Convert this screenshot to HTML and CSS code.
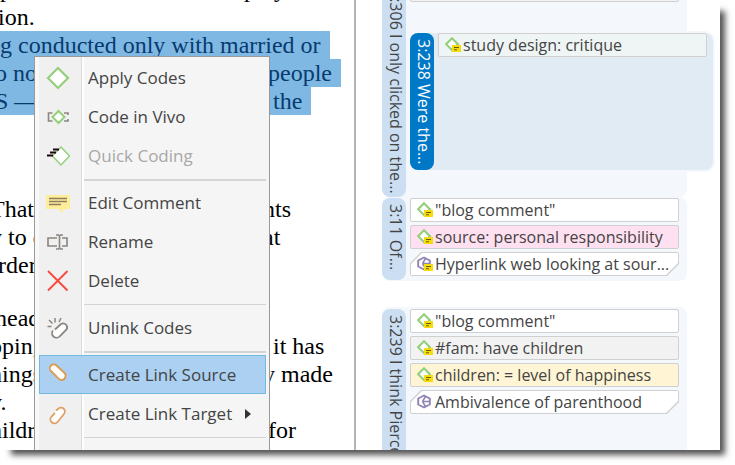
FILE: index.html
```html
<!DOCTYPE html>
<html lang="en">
<head>
<meta charset="utf-8">
<title>Document coding</title>
<link rel="stylesheet" href="styles.css">
</head>
<body>
<svg class="defs" aria-hidden="true">
  <symbol id="code" viewBox="0 0 16 16">
    <path d="M7 1.300 12.900 7.200 7 13.100 1.100 7.200Z" fill="#fff" stroke="#94cf7c" stroke-width="2.100"/>
    <path d="M7 8h9v7H7z" fill="#f5dc0a"/>
    <path d="M9 10.500h5M9 12.800h3" stroke="#6b5a14" stroke-width="1.100"/>
  </symbol>
  <symbol id="link" viewBox="0 0 16 16">
    <path d="M7 1.500 12.800 4.500v6L7 13.500 1.200 10.500v-6Z" fill="#fff" stroke="#9182b4" stroke-width="1.900" stroke-linejoin="round"/>
    <path d="M5.500 7.500h7M5.500 7.500 8.500 2.500M5.500 7.500 8.500 12.500" fill="none" stroke="#9182b4" stroke-width="1.500"/>
  </symbol>
  <symbol id="badge" viewBox="0 0 16 16">
    <path d="M7 8h9v7H7z" fill="#f5dc0a"/>
    <path d="M9 10.500h5M9 12.800h3" stroke="#6b5a14" stroke-width="1.100"/>
  </symbol>
</svg>
<main class="window">
  <section class="document">
    <p class="para para--first">
      <span class="line"><span class="head">p</span><span class="tail tail--early">p &nbsp; y</span></span>
      <span class="line"><span class="head head--near">ion.</span></span>
      <mark class="line"><span class="head">g conducted only with married or</span></mark>
      <mark class="line"><span class="head head--mid">o not</span><span class="tail">people</span></mark>
      <mark class="line"><span class="head head--mid">S —–</span><span class="tail tail--far">the</span></mark>
    </p>
    <p class="para">
      <span class="line"><span class="head head--far">That</span><span class="tail tail--near">nts</span></span>
      <span class="line"><span class="head head--far">y to c</span><span class="tail tail--near">at</span></span>
      <span class="line"><span class="head head--near">rder</span></span>
    </p>
    <p class="para">
      <span class="line"><span class="head head--mid">head</span></span>
      <span class="line"><span class="head head--far">pping</span><span class="tail tail--far">it has</span></span>
      <span class="line"><span class="head head--far">hings</span><span class="tail tail--near">y made</span></span>
      <span class="line"><span class="head head--far">y.</span></span>
      <span class="line"><span class="head head--far">hildr</span><span class="tail">for</span></span>
    </p>
    <nav class="menu">
      <button class="item"><svg class="icon" viewBox="0 0 24 24"><path d="M12 2 22 12 12 22 2 12Z" fill="#fff" stroke="#94cf7c" stroke-width="2.200"/></svg><span>Apply Codes</span></button>
      <button class="item"><svg class="icon" viewBox="0 0 24 24"><path d="M6.500 8H2.500v8h4M18 8h4v2M22 14v2h-4" fill="none" stroke="#8c8580" stroke-width="1.600"/><path d="M12.500 6 18.500 12l-6 6-6-6Z" fill="#fff" stroke="#94cf7c" stroke-width="2"/></svg><span>Code in Vivo</span></button>
      <button class="item" disabled><svg class="icon" viewBox="0 0 24 24"><path d="M15 3 23.500 12 15 21 6.500 12Z" fill="#fff" stroke="#94cf7c" stroke-width="1.500"/><path d="M7 5.500h6M4 8.500h6M1 11.500h6" stroke="#1c0710" stroke-width="1.800"/></svg><span>Quick Coding</span></button>
      <hr class="rule rule--thick">
      <button class="item"><svg class="icon" viewBox="0 0 24 24"><path d="M0 4h24v14h-7v4l-5-4H0Z" fill="#feee99"/><path d="M3 7.500h18M3 10.500h18M3 13.500h12" stroke="#8f7c62" stroke-width="1.300"/></svg><span>Edit Comment</span></button>
      <button class="item"><svg class="icon" viewBox="0 0 24 24"><path d="M11 8H2v8h9M16 8h5v8h-5M13.500 6v12M10 5h2.500l1 1 1-1H17M10 19h2.500l1-1 1 1H17" fill="none" stroke="#8c8580" stroke-width="1.600"/></svg><span>Rename</span></button>
      <button class="item"><svg class="icon" viewBox="0 0 24 24"><path d="M2 2 21.500 21.500M21.500 2 2 21.500" stroke="#fa4a40" stroke-width="1.900"/></svg><span>Delete</span></button>
      <hr class="rule">
      <button class="item"><svg class="icon" viewBox="0 0 24 24"><path d="M9 13.500 15 8a4 4 0 0 1 5.500 5.500L14 20a4.200 4.200 0 0 1-7-5.500Z" fill="#fff"/><path d="M9 13.500 15 8a4 4 0 0 1 5.500 5.500L14 20a4.200 4.200 0 0 1-7-5.500" fill="none" stroke="#8c8580" stroke-width="1.800"/><path d="M9 2v4.500M3 4l3.500 3.500M15 2l-2 4M1.500 10.500h4" stroke="#8c8580" stroke-width="1.500"/></svg><span>Unlink Codes</span></button>
      <hr class="rule rule--thick">
      <button class="item item--active"><svg class="icon" viewBox="0 0 24 24"><path d="M10.500 13.500 5 8a3.800 3.800 0 0 1 5.500-5.500L18 9.500a4.200 4.200 0 0 1-3 7.500q-2-.5-4.500-3.500" fill="#fff" stroke="#dc9a4d" stroke-width="1.800"/></svg><span>Create Link Source</span></button>
      <button class="item"><svg class="icon" viewBox="0 0 24 24"><path d="M10 9 13 7a4 4 0 0 1 5 6l-6.500 7a4 4 0 0 1-6-5.500Z" fill="#fff"/><path d="m10 8.500 2-1.500a3.800 3.800 0 0 1 6 5l-6.500 8a3.800 3.800 0 0 1-6-5.500L9 11" fill="none" stroke="#dfa065" stroke-width="1.800"/></svg><span>Create Link Target</span><svg class="arrow" viewBox="0 0 6 10"><path d="m0 0 6 5-6 5Z" fill="#333"/></svg></button>
      <hr class="rule">
    </nav>
  </section>
  <aside class="margin">
    <section class="quote quote--top">
      <h2 class="bar bar--end">3:306 I only clicked on the...</h2>
      <div class="stack">
        <div class="code code--grey"></div>
        <section class="quote quote--selected">
          <h2 class="bar bar--selected">3:238 Were the...</h2>
          <ul class="codes">
            <li class="code code--mint"><svg class="mark"><use href="#code"/></svg>study design: critique</li>
          </ul>
        </section>
      </div>
    </section>
    <section class="quote">
      <h2 class="bar">3:11 Of...</h2>
      <ul class="codes">
        <li class="code"><svg class="mark"><use href="#code"/></svg>"blog comment"</li>
        <li class="code code--pink"><svg class="mark"><use href="#code"/></svg>source: personal responsibility</li>
        <li class="code code--link"><svg class="mark"><use href="#link"/><use href="#badge"/></svg>Hyperlink web looking at sour...</li>
      </ul>
    </section>
    <section class="quote quote--last">
      <h2 class="bar bar--open">3:239 I think Pierce</h2>
      <ul class="codes">
        <li class="code"><svg class="mark"><use href="#code"/></svg>"blog comment"</li>
        <li class="code code--grey"><svg class="mark"><use href="#code"/></svg>#fam: have children</li>
        <li class="code code--cream"><svg class="mark"><use href="#code"/></svg>children: = level of happiness</li>
        <li class="code code--link"><svg class="mark"><use href="#link"/></svg>Ambivalence of parenthood</li>
      </ul>
    </section>
  </aside>
</main>
</body>
</html>
```
FILE: styles.css
```css
* {
  box-sizing: border-box;
}

body {
  margin: 0;
  height: 100vh;
  padding: 0 15px 15px 0;
  overflow: hidden;
  background: #fff;
  font-family: "Open Sans", "Noto Sans", sans-serif;
  font-size: 16px;
  color: #444;
}

.defs {
  display: none;
}

.window {
  display: flex;
  height: 100%;
  background: #fff;
  box-shadow: 8px 8px 6px -3px #555;
}

.document {
  position: relative;
  flex: 1;
  min-width: 0;
  overflow: hidden;
  border-right: 2px solid #b4b4b4;
  font: 24px/28px "Liberation Serif", serif;
  color: #000;
}

.para {
  margin: 0 0 25px;
}

.para--first {
  margin: -25px 0 80px;
}

.line {
  display: grid;
  grid-template-columns: 268px auto;
  width: max-content;
  height: 28px;
  white-space: pre;
}

mark.line {
  padding-right: 9px;
  background: #80b8e4;
  color: #073b6e;
}

.head:only-child {
  grid-column: 1 / -1;
}

.head--near {
  text-indent: -2px;
}

.head--mid {
  text-indent: -5px;
}

.head--far {
  text-indent: -10px;
}

.tail--near {
  margin-left: -5px;
}

.tail--far {
  margin-left: 5px;
}

.tail--early {
  margin-left: -24px;
}

.menu {
  position: absolute;
  top: 56px;
  left: 34px;
  width: 236px;
  height: 420px;
  padding: 1px 3px 0 4px;
  border: 1px solid #999;
  background: linear-gradient(90deg, #f8f8f8 4px, #f0f0f0 4px 46px, #dcdcdc 46px 47px, #fff 47px 49px, #f5f5f5 49px);
}

.item {
  display: flex;
  align-items: center;
  width: 100%;
  height: 39px;
  padding: 0 14px 0 6px;
  border: 1px solid transparent;
  background: none;
  font: 17px/24px "Open Sans", "Noto Sans", sans-serif;
  color: #444;
  text-align: left;
  white-space: nowrap;
}

.item:disabled {
  color: #a8a8a8;
}

.item--active {
  border-color: #70bade;
  background: #abd0f2;
}

.icon {
  flex: none;
  width: 24px;
  height: 24px;
  margin-right: 18px;
}

.arrow {
  flex: none;
  width: 6px;
  height: 10px;
  margin-left: auto;
}

.rule {
  height: 1px;
  margin: 4px 0 3px 45px;
  border: 0;
  background: #d4d4d4;
}

.rule--thick {
  height: 2px;
  margin-bottom: 2px;
}

.margin {
  display: flex;
  flex-direction: column;
  width: 364px;
  padding-left: 26px;
  overflow: hidden;
}

.quote {
  display: flex;
  flex: none;
  gap: 4px;
  width: 305px;
  margin-bottom: 26px;
  padding: 1px 8px 1px 0;
  border-radius: 8px;
  background: #f4f8fc;
}

.quote--top {
  height: 197px;
  margin: 0;
  padding: 0 8px 0 0;
  border-radius: 0 0 8px 8px;
}

.quote--last {
  flex: 1;
  margin: 0;
  padding: 2px 8px 0 0;
  border-radius: 8px 8px 0 0;
}

.quote--selected {
  width: 303px;
  height: 137px;
  margin: 0;
  padding: 0 6px 0 0;
  background: #e0ebf4;
  box-shadow: 0 0 0 2px #f4f8fc;
}

.stack {
  display: flex;
  flex: 1;
  flex-direction: column;
  gap: 31px;
  min-width: 0;
  margin-top: -22px;
}

.bar {
  flex: none;
  width: 24px;
  margin: 0;
  padding: 6px 0;
  border-radius: 8px;
  overflow: hidden;
  background: #ccdff2;
  font-size: 16px;
  font-weight: 400;
  line-height: 20px;
  white-space: nowrap;
  writing-mode: vertical-rl;
}

.bar--end {
  display: flex;
  justify-content: flex-end;
  padding-bottom: 3px;
  border-radius: 0 0 8px 8px;
}

.bar--open {
  border-radius: 8px 8px 0 0;
  padding-bottom: 0;
}

.bar--selected {
  background: #0078c8;
  color: #fff;
}

.codes {
  display: flex;
  flex: 1;
  flex-direction: column;
  gap: 3px;
  min-width: 0;
  margin: 0;
  padding: 0 0 4px;
  list-style: none;
}

.code {
  position: relative;
  z-index: 0;
  display: flex;
  flex: none;
  align-items: center;
  gap: 2px;
  height: 24px;
  padding: 0 6px;
  border: 1px solid #d0d0d0;
  border-radius: 2px;
  background: #fff;
  line-height: 22px;
  white-space: nowrap;
}

.code--grey {
  background: #f2f2f2;
}

.code--mint {
  background: #eff4f4;
}

.code--pink {
  background: #ffe0f0;
}

.code--cream {
  background: #fff5d4;
}

.code--link,
.code--link::before {
  clip-path: polygon(11px 0, 100% 0, 100% calc(100% - 12px), calc(100% - 12px) 100%, 0 100%, 0 11px);
}

.code--link {
  background: #d0d0d0;
}

.code--link::before {
  content: "";
  position: absolute;
  z-index: -1;
  inset: 0;
  background: #fff;
}

.mark {
  flex: none;
  width: 16px;
  height: 16px;
}
```
